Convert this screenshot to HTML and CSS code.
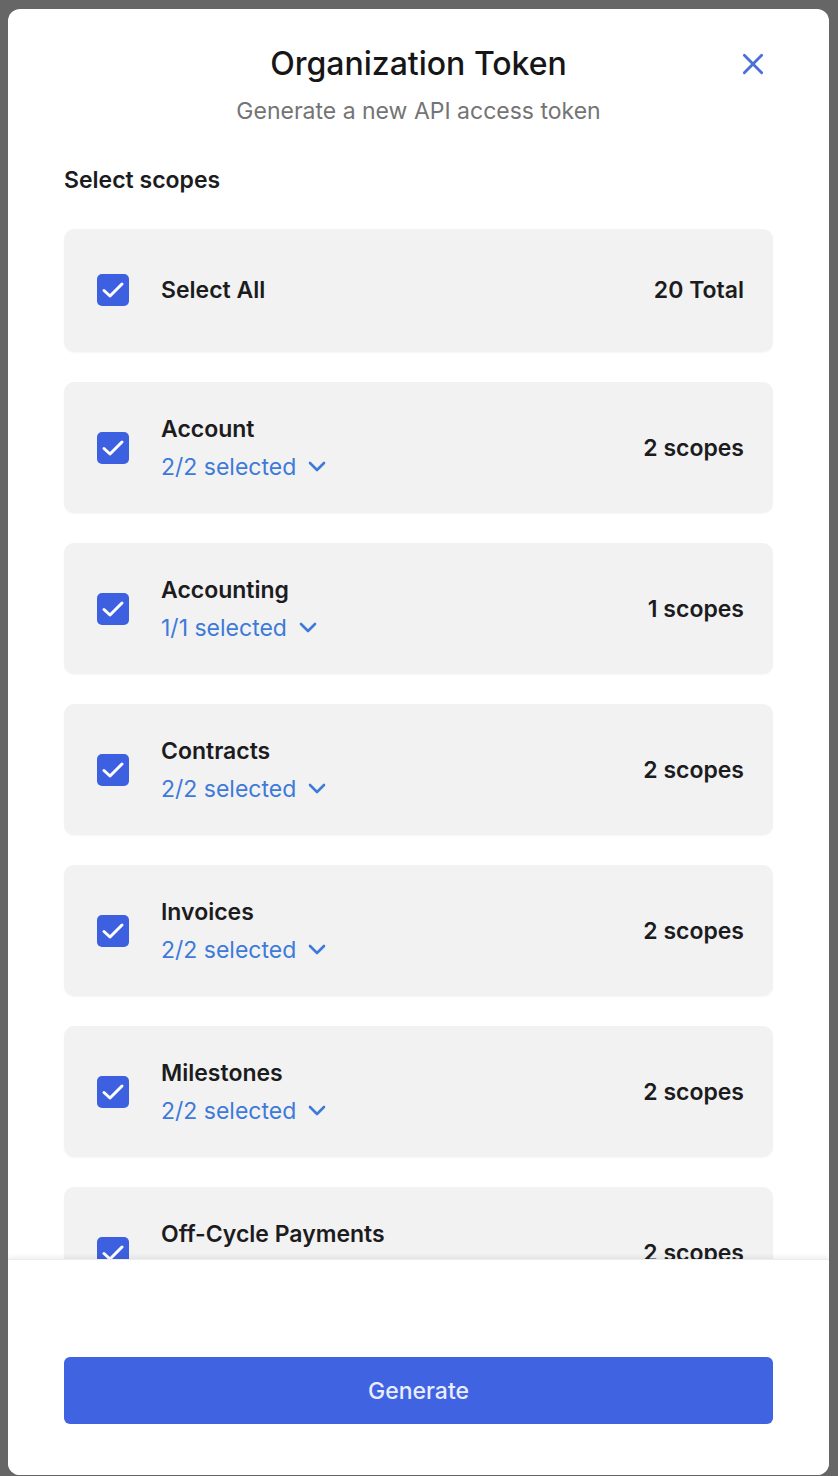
FILE: index.html
```html
<!DOCTYPE html>
<html lang="en">
<head>
<meta charset="utf-8">
<title>Organization Token</title>
<link rel="stylesheet" href="styles.css">
</head>
<body>
<div class="overlay">
  <div class="modal">
    <header class="modal-header">
      <h1 class="title">Organization Token</h1>
      <p class="subtitle">Generate a new API access token</p>
      <button class="close" aria-label="Close">
        <svg viewBox="0 0 24 24" width="26" height="26"><path d="M4 4 L20 20 M20 4 L4 20" stroke="currentColor" stroke-width="2.6" stroke-linecap="round" fill="none"/></svg>
      </button>
    </header>
    <div class="modal-body">
      <h2 class="section-label">Select scopes</h2>
      <div class="list">
        <div class="card card-single">
          <span class="check"><svg viewBox="0 0 32 32" width="32" height="32"><path d="M7 16.5 L13 22 L25 10" stroke="#fff" stroke-width="3" fill="none" stroke-linecap="round" stroke-linejoin="round"/></svg></span>
          <div class="info"><div class="name">Select All</div></div>
          <div class="count">20 Total</div>
        </div>
        <div class="card">
          <span class="check"><svg viewBox="0 0 32 32" width="32" height="32"><path d="M7 16.5 L13 22 L25 10" stroke="#fff" stroke-width="3" fill="none" stroke-linecap="round" stroke-linejoin="round"/></svg></span>
          <div class="info"><div class="name">Account</div><div class="sel">2/2 selected <svg class="chev" viewBox="0 0 20 12" width="20" height="12"><path d="M3 2 L10 9 L17 2" stroke="currentColor" stroke-width="2.6" fill="none" stroke-linecap="round" stroke-linejoin="round"/></svg></div></div>
          <div class="count">2 scopes</div>
        </div>
        <div class="card">
          <span class="check"><svg viewBox="0 0 32 32" width="32" height="32"><path d="M7 16.5 L13 22 L25 10" stroke="#fff" stroke-width="3" fill="none" stroke-linecap="round" stroke-linejoin="round"/></svg></span>
          <div class="info"><div class="name">Accounting</div><div class="sel">1/1 selected <svg class="chev" viewBox="0 0 20 12" width="20" height="12"><path d="M3 2 L10 9 L17 2" stroke="currentColor" stroke-width="2.6" fill="none" stroke-linecap="round" stroke-linejoin="round"/></svg></div></div>
          <div class="count">1 scopes</div>
        </div>
        <div class="card">
          <span class="check"><svg viewBox="0 0 32 32" width="32" height="32"><path d="M7 16.5 L13 22 L25 10" stroke="#fff" stroke-width="3" fill="none" stroke-linecap="round" stroke-linejoin="round"/></svg></span>
          <div class="info"><div class="name">Contracts</div><div class="sel">2/2 selected <svg class="chev" viewBox="0 0 20 12" width="20" height="12"><path d="M3 2 L10 9 L17 2" stroke="currentColor" stroke-width="2.6" fill="none" stroke-linecap="round" stroke-linejoin="round"/></svg></div></div>
          <div class="count">2 scopes</div>
        </div>
        <div class="card">
          <span class="check"><svg viewBox="0 0 32 32" width="32" height="32"><path d="M7 16.5 L13 22 L25 10" stroke="#fff" stroke-width="3" fill="none" stroke-linecap="round" stroke-linejoin="round"/></svg></span>
          <div class="info"><div class="name">Invoices</div><div class="sel">2/2 selected <svg class="chev" viewBox="0 0 20 12" width="20" height="12"><path d="M3 2 L10 9 L17 2" stroke="currentColor" stroke-width="2.6" fill="none" stroke-linecap="round" stroke-linejoin="round"/></svg></div></div>
          <div class="count">2 scopes</div>
        </div>
        <div class="card">
          <span class="check"><svg viewBox="0 0 32 32" width="32" height="32"><path d="M7 16.5 L13 22 L25 10" stroke="#fff" stroke-width="3" fill="none" stroke-linecap="round" stroke-linejoin="round"/></svg></span>
          <div class="info"><div class="name">Milestones</div><div class="sel">2/2 selected <svg class="chev" viewBox="0 0 20 12" width="20" height="12"><path d="M3 2 L10 9 L17 2" stroke="currentColor" stroke-width="2.6" fill="none" stroke-linecap="round" stroke-linejoin="round"/></svg></div></div>
          <div class="count">2 scopes</div>
        </div>
        <div class="card">
          <span class="check"><svg viewBox="0 0 32 32" width="32" height="32"><path d="M7 16.5 L13 22 L25 10" stroke="#fff" stroke-width="3" fill="none" stroke-linecap="round" stroke-linejoin="round"/></svg></span>
          <div class="info"><div class="name">Off-Cycle Payments</div><div class="sel">2/2 selected <svg class="chev" viewBox="0 0 20 12" width="20" height="12"><path d="M3 2 L10 9 L17 2" stroke="currentColor" stroke-width="2.6" fill="none" stroke-linecap="round" stroke-linejoin="round"/></svg></div></div>
          <div class="count">2 scopes</div>
        </div>
      </div>
    </div>
    <footer class="modal-footer">
      <button class="generate">Generate</button>
    </footer>
  </div>
</div>
</body>
</html>
```

FILE: styles.css
```css
* { box-sizing: border-box; }
html, body { margin: 0; padding: 0; }
body {
  background: #666666;
  font-family: Inter, "Noto Sans", "Liberation Sans", sans-serif;
  color: #1c1c1e;
}
.overlay {
  height: 1476px;
  padding: 9px 9px 1px 8px;
}
.modal {
  height: 1466px;
  background: #ffffff;
  border-radius: 12px;
  display: flex;
  flex-direction: column;
  overflow: hidden;
}
.modal-header {
  position: relative;
  padding-top: 37px;
  height: 116px;
  text-align: center;
}
.title {
  margin: 0;
  font-size: 32px;
  line-height: 36px;
  font-weight: 500;
  color: #161618;
  letter-spacing: 0;
}
.subtitle {
  margin: 15px 0 0;
  font-size: 23px;
  line-height: 28px;
  color: #747474;
}
.close {
  position: absolute;
  top: 42px;
  right: 63px;
  width: 26px;
  height: 26px;
  padding: 0;
  border: 0;
  background: none;
  color: #4b6fd8;
  display: flex;
}
.modal-body {
  flex: 1;
  overflow: hidden;
  padding: 41px 56px 0;
}
.section-label {
  margin: 0 0 35px;
  font-size: 23px;
  line-height: 28px;
  font-weight: 600;
  color: #1c1c1e;
}
.list {
  display: flex;
  flex-direction: column;
  gap: 30px;
}
.card {
  display: flex;
  align-items: center;
  background: #f2f2f2;
  border-radius: 10px;
  padding: 33px 29px 32px 33px;
  box-shadow: 0 1px 2px rgba(0,0,0,0.04);
}
.card-single {
  padding-top: 45px;
  padding-bottom: 46px;
}
.check {
  width: 32px;
  height: 32px;
  border-radius: 5px;
  background: #3d60e0;
  display: flex;
  align-items: center;
  justify-content: center;
  flex: none;
}
.check svg { display: block; }
.info {
  flex: 1;
  margin-left: 32px;
  display: flex;
  flex-direction: column;
  gap: 10px;
}
.name {
  font-size: 23px;
  line-height: 28px;
  font-weight: 600;
  color: #1c1c1e;
}
.sel {
  font-size: 23px;
  line-height: 28px;
  color: #3d7ad9;
  display: flex;
  align-items: center;
  gap: 11px;
}
.chev { display: block; }
.count {
  font-size: 23px;
  line-height: 28px;
  font-weight: 600;
  color: #1c1c1e;
}
.modal-footer {
  height: 216px;
  padding: 97px 56px 52px;
  background: #ffffff;
  position: relative;
  box-shadow: 0 -2px 5px rgba(0,0,0,0.07);
  border-top: 1px solid #ececec;
}
.generate {
  width: 100%;
  height: 67px;
  border: 0;
  border-radius: 6px;
  background: #4063e1;
  color: #e8edff;
  font-family: inherit;
  font-size: 23px;
  font-weight: 500;
}
```
